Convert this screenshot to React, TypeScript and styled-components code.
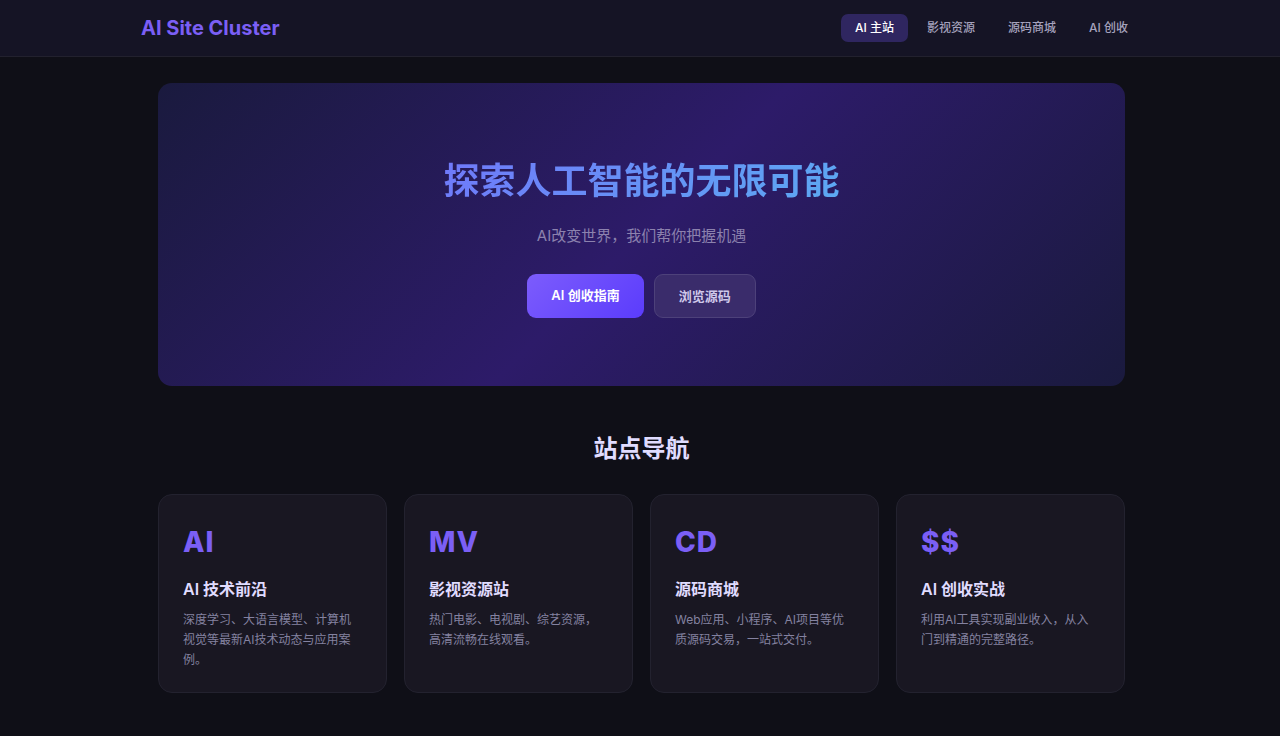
import React from "react";
import styled, { createGlobalStyle } from "styled-components";

const GlobalStyle = createGlobalStyle`
  *, *::before, *::after { box-sizing: border-box; }
  body {
    margin: 0;
    background: #0f0f17;
    color: #e0dcff;
    font-family: Inter, "Noto Sans CJK SC", sans-serif;
    font-size: 12px;
    line-height: 20px;
  }
  h1, h2, h3, p { margin: 0; }
  a { color: inherit; text-decoration: none; }
`;

const Header = styled.header`
  padding-left: 3px;
  background: #151425;
  border-bottom: 1px solid #22212e;
`;

const HeaderInner = styled.div`
  display: flex;
  flex-wrap: wrap;
  align-items: center;
  justify-content: space-between;
  max-width: 1001px;
  min-height: 56px;
  margin: 0 auto;
`;

const Logo = styled.a`
  && { color: #7b5ff5; }
  font-size: 20px;
  font-weight: 700;
  line-height: 24px;
`;

const Nav = styled.nav`
  display: flex;
  gap: 5px;
`;

const NavLink = styled.a<{ $active?: boolean }>`
  padding: 4px 14px;
  border-radius: 7px;
  font-weight: 500;
  && { color: ${(p) => (p.$active ? "#ffffff" : "#a5a2bd")}; }
  background: ${(p) => (p.$active ? "#2f2660" : "transparent")};
`;

const Main = styled.main`
  padding: 26px 0 43px 3px;
`;

const Container = styled.div`
  max-width: 967px;
  margin: 0 auto;
`;

const Hero = styled.section`
  display: flex;
  flex-direction: column;
  align-items: center;
  padding: 72px 24px 68px;
  border-radius: 14px;
  background: linear-gradient(135deg, #1a1a3e 0%, #2d1b69 50%, #1a1a3e 100%);
  text-align: center;
`;

const HeroTitle = styled.h1`
  font-size: 36px;
  font-weight: 700;
  line-height: 52px;
  background: linear-gradient(135deg, #7078fa, #5caaf2);
  background-clip: text;
  -webkit-background-clip: text;
  color: transparent;
`;

const HeroText = styled.p`
  margin: 17px 0 26px;
  color: #8c82ae;
  font-size: 15px;
  line-height: 24px;
`;

const Actions = styled.div`
  display: flex;
  flex-wrap: wrap;
  justify-content: center;
  gap: 10px;
`;

const ActionLink = styled.a<{ $primary?: boolean }>`
  padding: 11px 24px;
  border-radius: 9px;
  border: ${(p) => (p.$primary ? "0" : "1px solid #4d417a")};
  background: ${(p) => (p.$primary ? "linear-gradient(135deg, #7c5cfc, #5b3cfc)" : "#3a2c6b")};
  && { color: ${(p) => (p.$primary ? "#ffffff" : "#cfc8ea")}; }
  font-size: 13px;
  font-weight: 600;
`;

const SectionTitle = styled.h2`
  margin: 45px 0 27px;
  font-size: 24px;
  font-weight: 700;
  line-height: 36px;
  text-align: center;
`;

const Grid = styled.div`
  display: grid;
  grid-template-columns: repeat(auto-fit, minmax(210px, 1fr));
  gap: 17px;
`;

const Card = styled.a`
  padding: 24px 24px 22px;
  border: 1px solid #23222f;
  border-radius: 14px;
  background: #191722;
`;

const Mark = styled.div`
  color: #7b5ff5;
  font-size: 28px;
  font-weight: 800;
  line-height: 46px;
  letter-spacing: 1px;
`;

const CardTitle = styled.h3`
  margin: 12px 0 9px;
  font-size: 16px;
  font-weight: 600;
  line-height: 24px;
`;

const CardText = styled.p`
  color: #8482a0;
`;

const links = ["AI 主站", "影视资源", "源码商城", "AI 创收"];

const sites = [
  { mark: "AI", title: "AI 技术前沿", text: "深度学习、大语言模型、计算机视觉等最新AI技术动态与应用案例。" },
  { mark: "MV", title: "影视资源站", text: "热门电影、电视剧、综艺资源，高清流畅在线观看。" },
  { mark: "CD", title: "源码商城", text: "Web应用、小程序、AI项目等优质源码交易，一站式交付。" },
  { mark: "$$", title: "AI 创收实战", text: "利用AI工具实现副业收入，从入门到精通的完整路径。" },
];

export default function App() {
  return (
    <div lang="zh-CN">
      <GlobalStyle />
      <Header>
        <HeaderInner>
          <Logo href="#">AI Site Cluster</Logo>
          <Nav>
            {links.map((label, i) => (
              <NavLink key={label} href="#" $active={i === 0}>{label}</NavLink>
            ))}
          </Nav>
        </HeaderInner>
      </Header>
      <Main>
        <Container>
          <Hero>
            <HeroTitle>探索人工智能的无限可能</HeroTitle>
            <HeroText>AI改变世界，我们帮你把握机遇</HeroText>
            <Actions>
              <ActionLink href="#" $primary>AI 创收指南</ActionLink>
              <ActionLink href="#">浏览源码</ActionLink>
            </Actions>
          </Hero>
          <SectionTitle>站点导航</SectionTitle>
          <Grid>
            {sites.map((site) => (
              <Card key={site.mark} href="#">
                <Mark>{site.mark}</Mark>
                <CardTitle>{site.title}</CardTitle>
                <CardText>{site.text}</CardText>
              </Card>
            ))}
          </Grid>
        </Container>
      </Main>
    </div>
  );
}
